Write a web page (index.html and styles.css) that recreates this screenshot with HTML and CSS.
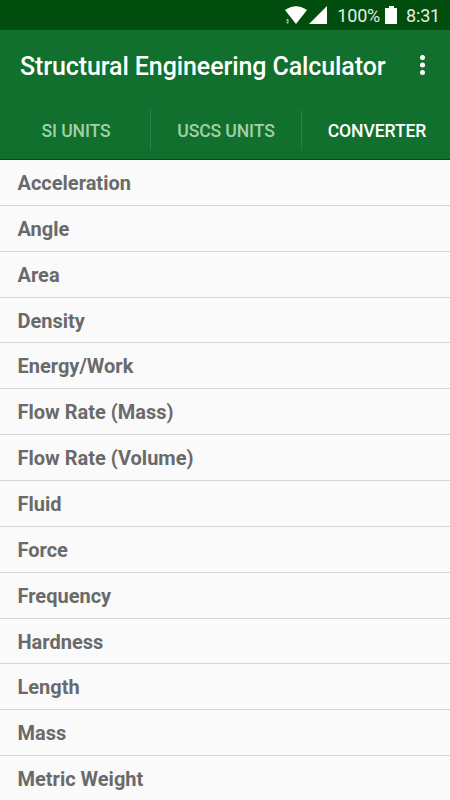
FILE: index.html
```html
<!DOCTYPE html>
<html lang="en">
<head>
	<meta charset="UTF-8">
	<title>Structural Engineering Calculator</title>
	<link rel="stylesheet" href="styles.css">
</head>
<body>
	<div class="status">
		<svg class="wifi" width="22" height="18" viewBox="0 0 22 18"><path d="M0 4Q11 -3.6 22 4L11 18Z" fill="#fff"/><path d="M1 15L2.6 12.6L4.2 15ZM1 15.8H4.2L2.6 18Z" fill="#a9c9ae"/></svg>
		<svg class="signal" width="18" height="18" viewBox="0 0 18 18"><path d="M18 0V18H0Z" fill="#fff"/></svg>
		<span class="percent">100%</span>
		<svg class="battery" width="12" height="18" viewBox="0 0 12 18"><path d="M4 0H9V2H12V18H0V2H4Z" fill="#fff"/></svg>
		<span class="clock">8:31</span>
	</div>
	<div class="header">
		<div class="toolbar">
			<h1>Structural Engineering Calculator</h1>
			<svg class="more" width="6" height="20" viewBox="0 0 6 20" fill="#fff"><circle cx="2.5" cy="2.6" r="2.5"/><circle cx="2.5" cy="10" r="2.5"/><circle cx="2.5" cy="17.4" r="2.5"/></svg>
		</div>
		<div class="tabs">
			<a class="tab">SI UNITS</a>
			<a class="tab">USCS UNITS</a>
			<a class="tab active">CONVERTER</a>
		</div>
	</div>
	<ul class="list">
		<li>Acceleration</li>
		<li>Angle</li>
		<li>Area</li>
		<li>Density</li>
		<li>Energy/Work</li>
		<li>Flow Rate (Mass)</li>
		<li>Flow Rate (Volume)</li>
		<li>Fluid</li>
		<li>Force</li>
		<li>Frequency</li>
		<li>Hardness</li>
		<li>Length</li>
		<li>Mass</li>
		<li>Metric Weight</li>
	</ul>
</body>
</html>
```

FILE: styles.css
```css
html, body {
	margin: 0;
	padding: 0;
	height: 800px;
	overflow: hidden;
	background: #fafafa;
	font-family: Roboto, sans-serif;
}
.status {
	display: flex;
	align-items: center;
	justify-content: flex-end;
	box-sizing: border-box;
	height: 30px;
	padding: 1px 10px 1px 0;
	background: #004d0d;
	color: #e3ede4;
	font-size: 18px;
	letter-spacing: -0.2px;
}
.wifi {
	margin-right: -1px;
}
.signal {
	margin-left: 3px;
}
.percent {
	margin-left: 10px;
}
.battery {
	margin-left: 5px;
}
.clock {
	margin-left: 9px;
}
.header {
	box-sizing: border-box;
	height: 130px;
	border-bottom: 1px solid #084a18;
	background: #11702d;
}
.toolbar {
	display: flex;
	align-items: center;
	justify-content: space-between;
	height: 70px;
	padding: 1px 24px 0 20px;
}
.more {
	margin-bottom: 2px;
}
h1 {
	margin: 1px 0 0;
	color: #fff;
	font-size: 25px;
	font-weight: 500;
	letter-spacing: -0.1px;
	white-space: nowrap;
}
.tabs {
	display: flex;
	height: 58px;
	align-items: center;
	margin-right: -2px;
}
.tab {
	flex: 1;
	box-sizing: border-box;
	height: 40px;
	line-height: 43px;
	text-align: center;
	font-size: 17.6px;
	font-weight: 500;
	letter-spacing: -0.12px;
	color: #a0d0a8;
}
.tab:first-child {
	text-indent: 2px;
}
.tab + .tab {
	border-left: 1px solid #2b8044;
}
.tab.active {
	color: #fff;
}
.list {
	margin: 0;
	padding: 0;
	list-style: none;
}
.list li {
	box-sizing: border-box;
	height: 45.86px;
	padding-left: 17.5px;
	border-bottom: 1px solid #d6d6d6;
	line-height: 46px;
	font-size: 20px;
	font-weight: bold;
	color: #6a6a6a;
}
```
